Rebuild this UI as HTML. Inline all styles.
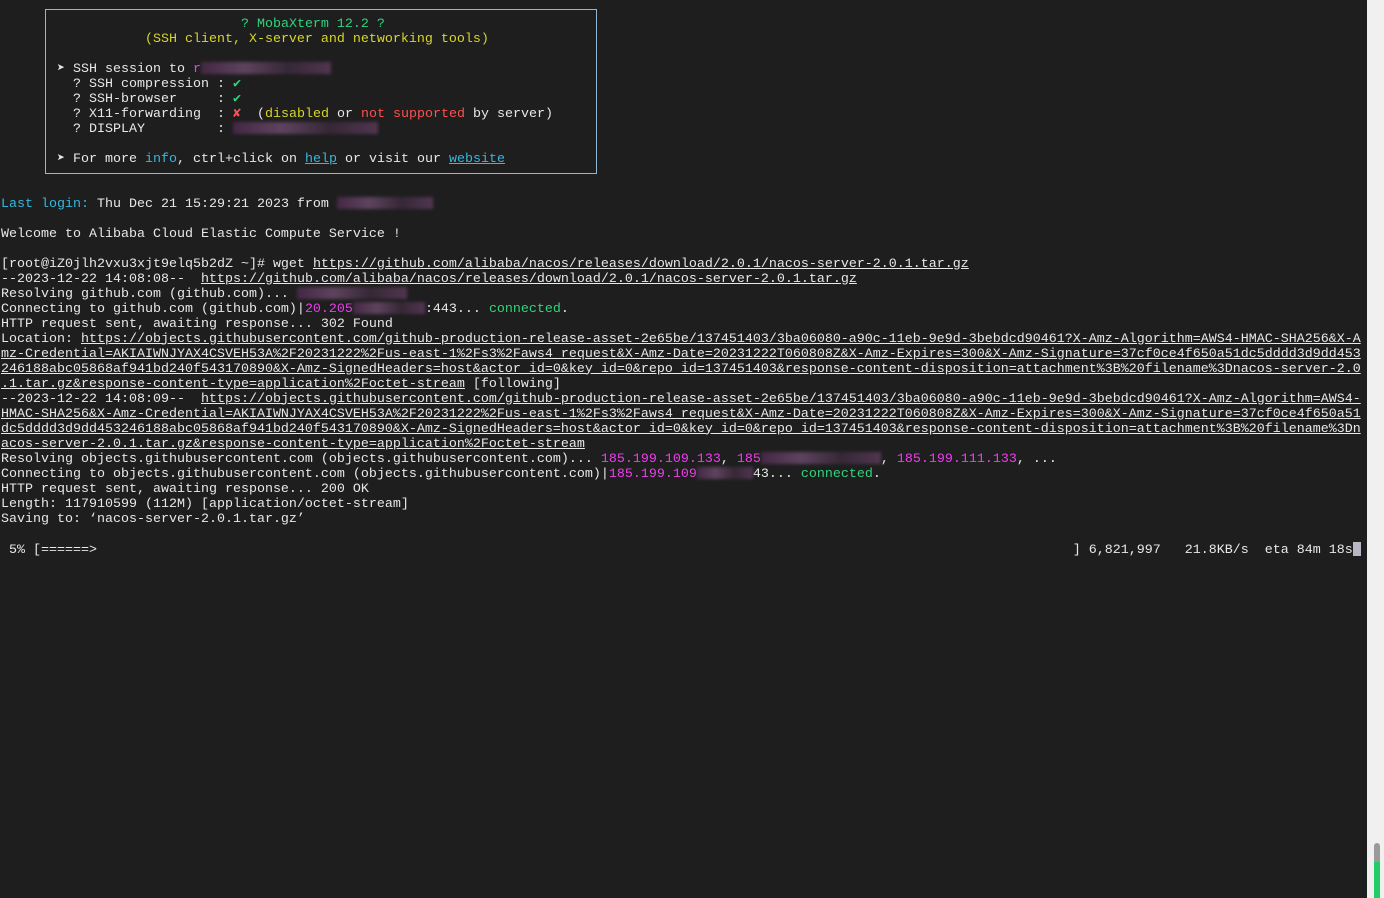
<!DOCTYPE html>
<html><head><meta charset="utf-8"><style>
html,body{margin:0;padding:0;width:1384px;height:898px;overflow:hidden;background:#1e1e1e}
#t{position:absolute;left:1px;top:16.5px;margin:0;font-family:"Liberation Mono","DejaVu Sans Mono",monospace;font-size:13.33px;line-height:15px;color:#e8e8e8;white-space:pre}
.g{color:#2fd47c}.y{color:#d6d62a}.r{color:#ff5050}.c{color:#35b8e0}.m{color:#f03cf0}
u{text-decoration:underline}
.cu{text-decoration:underline;color:#35b8e0}
.x{display:inline-block;height:12px;vertical-align:-2px;background:linear-gradient(90deg,#4a2a4a,#6a4a6a,#3a2a3a,#5a3a5a);filter:blur(1.5px);opacity:.85}
#box{position:absolute;left:45px;top:9px;width:550px;height:163px;border:1px solid #8fb8d8}
#sb{position:absolute;left:1367px;top:0;width:17px;height:898px;background:#f0f0f0}
#sbt{position:absolute;left:1374px;top:843px;width:6px;height:55px;border-radius:3px;background:#9a9a9a}
#sbg{position:absolute;left:1374px;top:862px;width:6px;height:36px;background:#22cc66}
.cur{display:inline-block;width:8px;height:14px;background:#b8b8c4;vertical-align:-3px}
</style></head><body>
<div id="box"></div>
<pre id="t">                              <span class="g">? MobaXterm 12.2 ?</span>
                  <span class="y">(SSH client, X-server and networking tools)</span>

       ➤ SSH session to <span class="m">r</span><span class="x" style="width:130px"></span>
         ? SSH compression : <span class="g">✔</span>
         ? SSH-browser     : <span class="g">✔</span>
         ? X11-forwarding  : <span class="r">✘</span>  (<span class="y">disabled</span> or <span class="r">not supported</span> by server)
         ? DISPLAY         : <span class="x" style="width:145px"></span>

       ➤ For more <span class="c">info</span>, ctrl+click on <span class="cu">help</span> or visit our <span class="cu">website</span>


<span class="c">Last login:</span> Thu Dec 21 15:29:21 2023 from <span class="x" style="width:96px"></span>

Welcome to Alibaba Cloud Elastic Compute Service !

[root@iZ0jlh2vxu3xjt9elq5b2dZ ~]# wget <u>https://github.com/alibaba/nacos/releases/download/2.0.1/nacos-server-2.0.1.tar.gz</u>
--2023-12-22 14:08:08--  <u>https://github.com/alibaba/nacos/releases/download/2.0.1/nacos-server-2.0.1.tar.gz</u>
Resolving github.com (github.com)... <span class="x" style="width:110px"></span>
Connecting to github.com (github.com)|<span class="m">20.205</span><span class="x" style="width:72px"></span>:443... <span class="g">connected</span>.
HTTP request sent, awaiting response... 302 Found
Location: <u>https://objects.githubusercontent.com/github-production-release-asset-2e65be/137451403/3ba06080-a90c-11eb-9e9d-3bebdcd90461?X-Amz-Algorithm=AWS4-HMAC-SHA256&amp;X-A</u>
<u>mz-Credential=AKIAIWNJYAX4CSVEH53A%2F20231222%2Fus-east-1%2Fs3%2Faws4_request&amp;X-Amz-Date=20231222T060808Z&amp;X-Amz-Expires=300&amp;X-Amz-Signature=37cf0ce4f650a51dc5dddd3d9dd453</u>
<u>246188abc05868af941bd240f543170890&amp;X-Amz-SignedHeaders=host&amp;actor_id=0&amp;key_id=0&amp;repo_id=137451403&amp;response-content-disposition=attachment%3B%20filename%3Dnacos-server-2.0</u>
<u>.1.tar.gz&amp;response-content-type=application%2Foctet-stream</u> [following]
--2023-12-22 14:08:09--  <u>https://objects.githubusercontent.com/github-production-release-asset-2e65be/137451403/3ba06080-a90c-11eb-9e9d-3bebdcd90461?X-Amz-Algorithm=AWS4-</u>
<u>HMAC-SHA256&amp;X-Amz-Credential=AKIAIWNJYAX4CSVEH53A%2F20231222%2Fus-east-1%2Fs3%2Faws4_request&amp;X-Amz-Date=20231222T060808Z&amp;X-Amz-Expires=300&amp;X-Amz-Signature=37cf0ce4f650a51</u>
<u>dc5dddd3d9dd453246188abc05868af941bd240f543170890&amp;X-Amz-SignedHeaders=host&amp;actor_id=0&amp;key_id=0&amp;repo_id=137451403&amp;response-content-disposition=attachment%3B%20filename%3Dn</u>
<u>acos-server-2.0.1.tar.gz&amp;response-content-type=application%2Foctet-stream</u>
Resolving objects.githubusercontent.com (objects.githubusercontent.com)... <span class="m">185.199.109.133</span>, <span class="m">185</span><span class="x" style="width:120px"></span>, <span class="m">185.199.111.133</span>, ...
Connecting to objects.githubusercontent.com (objects.githubusercontent.com)|<span class="m">185.199.109</span><span class="x" style="width:56px"></span>43... <span class="g">connected</span>.
HTTP request sent, awaiting response... 200 OK
Length: 117910599 (112M) [application/octet-stream]
Saving to: ‘nacos-server-2.0.1.tar.gz’

 5% [======>                                                                                                                          ] 6,821,997   21.8KB/s  eta 84m 18s<span class="cur"></span></pre>
<div id="sb"></div><div id="sbt"></div><div id="sbg"></div>
</body></html>
